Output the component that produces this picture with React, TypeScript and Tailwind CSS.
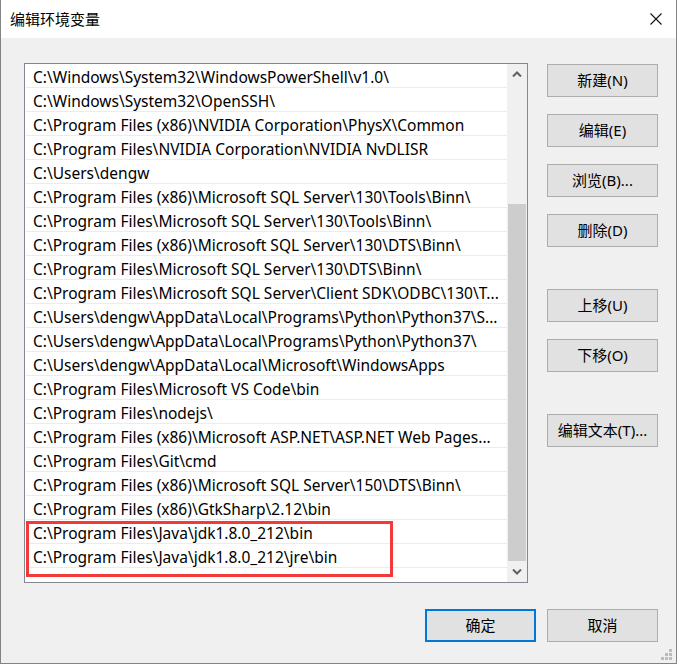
import React from 'react';

const paths = [
  'C:\\Windows\\System32\\WindowsPowerShell\\v1.0\\',
  'C:\\Windows\\System32\\OpenSSH\\',
  'C:\\Program Files (x86)\\NVIDIA Corporation\\PhysX\\Common',
  'C:\\Program Files\\NVIDIA Corporation\\NVIDIA NvDLISR',
  'C:\\Users\\dengw',
  'C:\\Program Files (x86)\\Microsoft SQL Server\\130\\Tools\\Binn\\',
  'C:\\Program Files\\Microsoft SQL Server\\130\\Tools\\Binn\\',
  'C:\\Program Files (x86)\\Microsoft SQL Server\\130\\DTS\\Binn\\',
  'C:\\Program Files\\Microsoft SQL Server\\130\\DTS\\Binn\\',
  'C:\\Program Files\\Microsoft SQL Server\\Client SDK\\ODBC\\130\\T...',
  'C:\\Users\\dengw\\AppData\\Local\\Programs\\Python\\Python37\\S...',
  'C:\\Users\\dengw\\AppData\\Local\\Programs\\Python\\Python37\\',
  'C:\\Users\\dengw\\AppData\\Local\\Microsoft\\WindowsApps',
  'C:\\Program Files\\Microsoft VS Code\\bin',
  'C:\\Program Files\\nodejs\\',
  'C:\\Program Files (x86)\\Microsoft ASP.NET\\ASP.NET Web Pages...',
  'C:\\Program Files\\Git\\cmd',
  'C:\\Program Files (x86)\\Microsoft SQL Server\\150\\DTS\\Binn\\',
  'C:\\Program Files (x86)\\GtkSharp\\2.12\\bin',
  'C:\\Program Files\\Java\\jdk1.8.0_212\\bin',
  'C:\\Program Files\\Java\\jdk1.8.0_212\\jre\\bin',
];

function Btn({ label, primary = false }: { label: string; primary?: boolean }) {
  return (
    <button
      type="button"
      className={`w-[111px] h-[33px] bg-[#e1e1e1] text-[15px] text-black flex items-center justify-center ${
        primary ? 'border-2 border-[#0078d7]' : 'border border-[#adadad]'
      }`}
    >
      {label}
    </button>
  );
}

function Chevron({ up }: { up?: boolean }) {
  return (
    <svg width="10" height="6" viewBox="0 0 10 6" fill="none">
      <path
        d={up ? 'M1 5.5L5 1.5L9 5.5' : 'M1 0.5L5 4.5L9 0.5'}
        stroke="#606060"
        strokeWidth="2"
      />
    </svg>
  );
}

export default function App() {
  return (
    <div
      className="relative w-[677px] h-[664px] flex flex-col border-x border-b border-[#838383] bg-[#f0f0f0] text-black"
      style={{ fontFamily: '"Noto Sans", "Noto Sans CJK SC", sans-serif' }}
    >
      {/* title bar */}
      <div className="h-[38px] bg-white flex items-center justify-between pl-[9px] pr-[14px] shrink-0">
        <span className="text-[15px]">编辑环境变量</span>
        <svg width="12" height="12" viewBox="0 0 12 12">
          <path d="M0.5 0.5L11.5 11.5M11.5 0.5L0.5 11.5" stroke="#111" strokeWidth="1.1" />
        </svg>
      </div>

      <div className="flex pl-[23px] pt-[25px]">
        {/* list */}
        <div className="w-[504px] h-[520px] border border-[#828790] bg-white flex">
          <div className="flex-1 flex flex-col pl-px">
            {paths.map((p, i) => (
              <div
                key={i}
                className="h-[24px] border-b border-[#ececec] pl-[7px] text-[15.5px] leading-[26px] whitespace-nowrap overflow-hidden"
              >
                {p}
              </div>
            ))}
          </div>
          <div className="w-[20px] bg-[#f0f0f0] flex flex-col">
            <div className="h-[20px] flex items-center justify-center">
              <Chevron up />
            </div>
            <div className="h-[120px]" />
            <div className="flex-1 mx-px bg-[#cdcdcd]" />
            <div className="h-[21px] flex items-center justify-center">
              <Chevron />
            </div>
          </div>
        </div>

        {/* side buttons */}
        <div className="ml-[19px] mt-px flex flex-col">
          <Btn label="新建(N)" />
          <div className="h-[17px]" />
          <Btn label="编辑(E)" />
          <div className="h-[17px]" />
          <Btn label="浏览(B)..." />
          <div className="h-[17px]" />
          <Btn label="删除(D)" />
          <div className="h-[42px]" />
          <Btn label="上移(U)" />
          <div className="h-[17px]" />
          <Btn label="下移(O)" />
          <div className="h-[42px]" />
          <Btn label="编辑文本(T)..." />
        </div>
      </div>

      {/* bottom buttons */}
      <div className="flex justify-end gap-[11px] pr-[18px] mt-[26px]">
        <Btn label="确定" primary />
        <Btn label="取消" />
      </div>

      {/* red annotation */}
      <div className="absolute left-[25px] top-[521px] w-[367px] h-[56px] border-[3px] border-[#f23a3a]" />

      {/* resize grip */}
      <div className="absolute right-[4px] bottom-[3px] grid grid-cols-3 gap-[1px]">
        <span className="w-[3px] h-[3px]" />
        <span className="w-[3px] h-[3px]" />
        <span className="w-[3px] h-[3px] bg-[#bcbcbc]" />
        <span className="w-[3px] h-[3px]" />
        <span className="w-[3px] h-[3px] bg-[#bcbcbc]" />
        <span className="w-[3px] h-[3px] bg-[#bcbcbc]" />
        <span className="w-[3px] h-[3px] bg-[#bcbcbc]" />
        <span className="w-[3px] h-[3px] bg-[#bcbcbc]" />
        <span className="w-[3px] h-[3px] bg-[#bcbcbc]" />
      </div>
    </div>
  );
}
